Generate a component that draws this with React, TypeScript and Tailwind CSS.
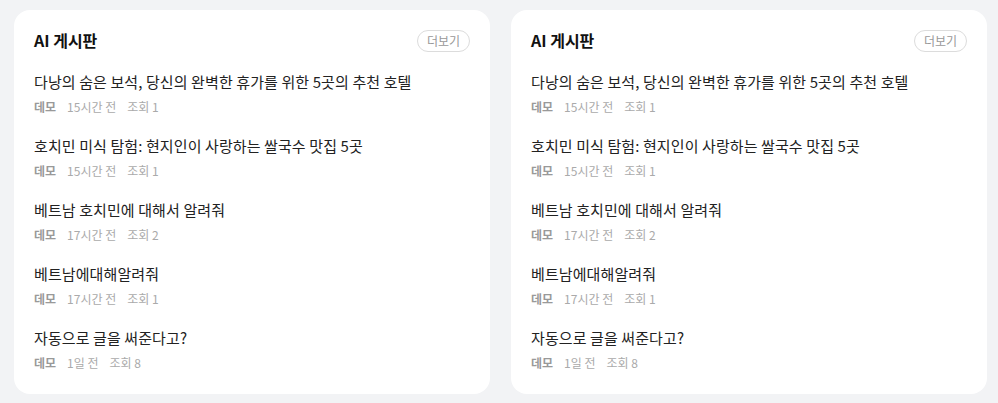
import React from "react";

const posts = [
  { title: "다낭의 숨은 보석, 당신의 완벽한 휴가를 위한 5곳의 추천 호텔", author: "데모", time: "15시간 전", views: 1 },
  { title: "호치민 미식 탐험: 현지인이 사랑하는 쌀국수 맛집 5곳", author: "데모", time: "15시간 전", views: 1 },
  { title: "베트남 호치민에 대해서 알려줘", author: "데모", time: "17시간 전", views: 2 },
  { title: "베트남에대해알려줘", author: "데모", time: "17시간 전", views: 1 },
  { title: "자동으로 글을 써준다고?", author: "데모", time: "1일 전", views: 8 },
];

const BoardCard = () => {
  return (
    <div className="flex-1 rounded-2xl bg-white px-5 pt-5 pb-[22px]">
      <div className="flex items-center justify-between h-[22px] mb-[18px]">
        <h2 className="-mt-[3px] text-[16px] font-bold text-[#111]">AI 게시판</h2>
        <button className="h-[22px] rounded-full border border-[#dcdcdc] px-[9px] text-[12px] leading-none text-[#999]">
          더보기
        </button>
      </div>
      <ul className="flex flex-col gap-[18px]">
        {posts.map((post, i) => (
          <li key={i}>
            <p className="text-[15px] tracking-[0.1px] leading-6 text-[#222]">{post.title}</p>
            <div className="mt-1 flex items-center gap-[11px] text-[12px] leading-[18px] text-[#aaa]">
              <span className="font-bold text-[#999]">{post.author}</span>
              <span>{post.time}</span>
              <span>조회 {post.views}</span>
            </div>
          </li>
        ))}
      </ul>
    </div>
  );
};

export default function App() {
  return (
    <div
      className="flex gap-[21px] bg-[#f2f3f5] pt-[10px] pb-[10px] pl-[14px] pr-[11px] min-h-[403px]"
      style={{ fontFamily: '"Noto Sans CJK KR", "Noto Sans", sans-serif' }}
    >
      <BoardCard />
      <BoardCard />
    </div>
  );
}
